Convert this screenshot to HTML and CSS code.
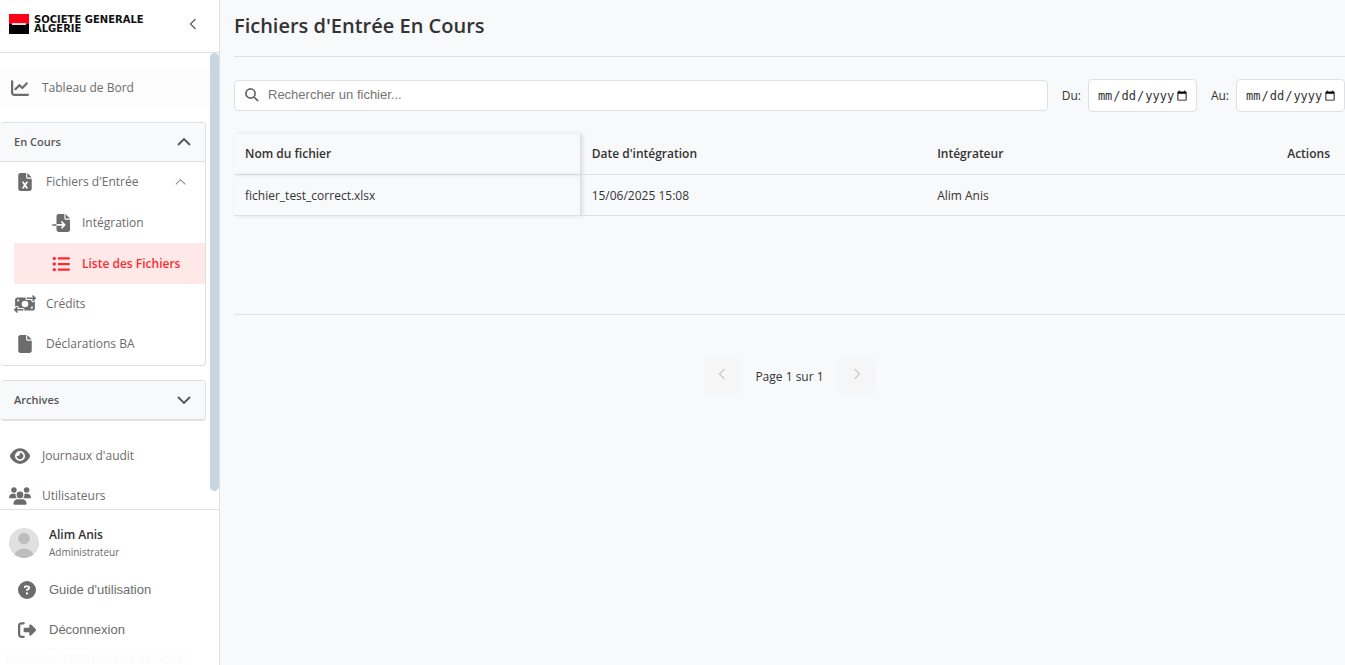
FILE: index.html
```html
<!DOCTYPE html>
<html lang="fr">
<head>
<meta charset="utf-8">
<title>Fichiers d'Entrée En Cours</title>
<link rel="stylesheet" href="styles.css">
</head>
<body>
<div class="app">
  <aside class="sidebar">
    <header class="brand">
      <svg class="brand-mark" viewBox="0 0 20 20" aria-hidden="true"><path fill="#ff0019" d="M0 0h20v10H0z"/><path d="M0 10h20v10H0z"/><path fill="#f3d9dc" d="M3 9h14v2H3z"/></svg>
      <div class="brand-name">SOCIETE GENERALE<br>ALGERIE</div>
      <button class="collapse" type="button" aria-label="Réduire le menu"><svg viewBox="0 0 8 12" aria-hidden="true"><path d="M6.500 1 1.500 6l5 5"/></svg></button>
    </header>
    <div class="nav-area">
      <nav class="nav">
        <a class="item top-item hovered" href="#"><svg class="icon" viewBox="0 0 512 512" aria-hidden="true"><path d="M64 64c0-17.700-14.300-32-32-32S0 46.300 0 64V400c0 44.200 35.800 80 80 80H480c17.700 0 32-14.300 32-32s-14.300-32-32-32H80c-8.800 0-16-7.200-16-16V64zm406.600 86.600c12.500-12.500 12.500-32.800 0-45.300s-32.800-12.500-45.300 0L320 210.700l-57.400-57.400c-12.500-12.500-32.800-12.500-45.300 0l-112 112c-12.500 12.500-12.500 32.800 0 45.300s32.800 12.500 45.300 0L240 221.300l57.400 57.400c12.500 12.500 32.800 12.500 45.300 0l128-128z"/></svg><span>Tableau de Bord</span></a>

        <section class="group">
          <button class="group-head" type="button" aria-expanded="true"><span>En Cours</span><svg class="chevron" viewBox="0 0 14 8" aria-hidden="true"><path d="M1 7l6-6 6 6"/></svg></button>
          <div class="group-body">
            <a class="item" href="#"><svg class="icon" viewBox="0 0 384 512" aria-hidden="true"><path d="M64 0C28.700 0 0 28.700 0 64V448c0 35.300 28.700 64 64 64H320c35.300 0 64-28.700 64-64V160H256c-17.700 0-32-14.300-32-32V0H64zM256 0V128H384L256 0zM155.700 250.200L192 302.100l36.300-51.900c7.600-10.900 22.600-13.500 33.400-5.900s13.500 22.600 5.900 33.400L221.300 344l46.400 66.200c7.600 10.900 5 25.800-5.900 33.400s-25.800 5-33.400-5.900L192 385.800l-36.300 51.900c-7.600 10.900-22.600 13.500-33.400 5.900s-13.500-22.600-5.900-33.400L162.700 344l-46.400-66.200c-7.600-10.900-5-25.800 5.900-33.400s25.800-5 33.400 5.900z"/></svg><span>Fichiers d'Entrée</span><svg class="chevron thin" viewBox="0 0 14 8" aria-hidden="true"><path d="M1 7l6-6 6 6"/></svg></a>
            <a class="item sub" href="#"><svg class="icon" viewBox="0 0 512 512" aria-hidden="true"><path d="M128 64c0-35.300 28.700-64 64-64H352V128c0 17.700 14.300 32 32 32H512V448c0 35.300-28.700 64-64 64H192c-35.300 0-64-28.700-64-64V336H302.100l-39 39c-9.400 9.400-9.400 24.600 0 33.900s24.600 9.400 33.900 0l80-80c9.400-9.400 9.400-24.600 0-33.900l-80-80c-9.400-9.400-24.600-9.400-33.900 0s-9.400 24.600 0 33.900l39 39H128V64zm0 224v48H24c-13.300 0-24-10.700-24-24s10.700-24 24-24H128zM512 128H384V0L512 128z"/></svg><span>Intégration</span></a>
            <a class="item sub active" href="#"><svg class="icon" viewBox="0 0 512 512" aria-hidden="true"><path d="M64 144a48 48 0 1 0 0-96 48 48 0 1 0 0 96zM192 64c-17.700 0-32 14.300-32 32s14.300 32 32 32H480c17.700 0 32-14.300 32-32s-14.300-32-32-32H192zm0 160c-17.700 0-32 14.300-32 32s14.300 32 32 32H480c17.700 0 32-14.300 32-32s-14.300-32-32-32H192zm0 160c-17.700 0-32 14.300-32 32s14.300 32 32 32H480c17.700 0 32-14.300 32-32s-14.300-32-32-32H192zM64 464a48 48 0 1 0 0-96 48 48 0 1 0 0 96zm48-208a48 48 0 1 0 -96 0 48 48 0 1 0 96 0z"/></svg><span>Liste des Fichiers</span></a>
            <a class="item" href="#"><svg class="icon" viewBox="0 0 640 512" aria-hidden="true"><path d="M535 41c-9.400-9.400-9.400-24.600 0-33.900s24.600-9.400 33.900 0l64 64c4.500 4.500 7 10.600 7 17s-2.500 12.500-7 17l-64 64c-9.400 9.400-24.600 9.400-33.900 0s-9.400-24.600 0-33.900l23-23L384 112c-13.300 0-24-10.700-24-24s10.700-24 24-24l174.100 0L535 41zM105 377l-23 23L256 400c13.300 0 24 10.700 24 24s-10.700 24-24 24L81.900 448l23 23c9.400 9.400 9.400 24.600 0 33.900s-24.600 9.400-33.900 0L7 441c-4.500-4.500-7-10.600-7-17s2.500-12.500 7-17l64-64c9.400-9.400 24.600-9.400 33.900 0s9.400 24.600 0 33.900zM96 64H337.900c-3.700 7.200-5.900 15.300-5.900 24c0 28.700 23.300 52 52 52l117.400 0c-4 17 .6 35.500 13.800 48.800c20.300 20.300 53.200 20.300 73.500 0L608 169.500V384c0 35.300-28.700 64-64 64H302.100c3.700-7.200 5.900-15.300 5.900-24c0-28.700-23.300-52-52-52l-117.400 0c4-17-.6-35.500-13.800-48.800c-20.300-20.300-53.200-20.300-73.500 0L32 342.500V128c0-35.300 28.700-64 64-64zm64 64H96v64c35.300 0 64-28.700 64-64zM544 320c-35.300 0-64 28.700-64 64h64V320zM320 352a96 96 0 1 0 0-192 96 96 0 1 0 0 192z"/></svg><span>Crédits</span></a>
            <a class="item" href="#"><svg class="icon" viewBox="0 0 384 512" aria-hidden="true"><path d="M0 64C0 28.700 28.700 0 64 0H224V128c0 17.700 14.300 32 32 32H384V448c0 35.300-28.700 64-64 64H64c-35.300 0-64-28.700-64-64V64zm384 64H256V0L384 128z"/></svg><span>Déclarations BA</span></a>
          </div>
        </section>

        <section class="group closed">
          <button class="group-head" type="button" aria-expanded="false"><span>Archives</span><svg class="chevron" viewBox="0 0 14 8" aria-hidden="true"><path d="M1 1l6 6 6-6"/></svg></button>
        </section>

        <a class="item top-item" href="#"><svg class="icon" viewBox="0 0 576 512" aria-hidden="true"><path d="M288 32c-80.800 0-145.500 36.800-192.600 80.600C48.600 156 17.300 208 2.500 243.700c-3.300 7.900-3.300 16.700 0 24.600C17.300 304 48.600 356 95.400 399.400C142.500 443.200 207.200 480 288 480s145.500-36.800 192.600-80.600c46.800-43.500 78.100-95.400 93-131.100c3.300-7.900 3.300-16.700 0-24.600c-14.900-35.700-46.200-87.700-93-131.100C433.500 68.800 368.800 32 288 32zM144 256a144 144 0 1 1 288 0 144 144 0 1 1 -288 0zm144-64c0 35.300-28.700 64-64 64c-7.100 0-13.900-1.200-20.300-3.300c-5.500-1.800-11.900 1.600-11.700 7.400c.3 6.900 1.300 13.800 3.200 20.700c13.700 51.200 66.400 81.600 117.600 67.900s81.600-66.400 67.900-117.600c-11.100-41.500-47.800-69.400-88.600-71.100c-5.800-.2-9.200 6.100-7.400 11.700c2.100 6.400 3.300 13.200 3.300 20.300z"/></svg><span>Journaux d'audit</span></a>
        <a class="item top-item" href="#"><svg class="icon" viewBox="0 0 640 512" aria-hidden="true"><circle cx="144" cy="80" r="80"/><circle cx="512" cy="80" r="80"/><circle cx="320" cy="224" r="96"/><path d="M107 192h42c16 0 31 4 45 10-8 42 5 86 41 118H21c-12 0-21-10-21-21 0-59 48-107 107-107zM405 320c36-32 49-76 41-118 14-6 29-10 45-10h42c59 0 107 48 107 107 0 11-9 21-21 21H405zM261 352h118c74 0 133 60 133 133 0 15-12 27-27 27H155c-15 0-27-12-27-27 0-73 59-133 133-133z"/></svg><span>Utilisateurs</span></a>
      </nav>
      <div class="scroll-track"><div class="scroll-thumb"></div></div>
    </div>
    <footer class="account">
      <div class="profile">
        <svg class="avatar" viewBox="0 0 30 30" aria-hidden="true"><defs><clipPath id="disc"><circle cx="15" cy="15" r="15"/></clipPath></defs><g clip-path="url(#disc)"><path fill="#e0e0e0" d="M0 0h30v30H0z"/><circle cx="15" cy="10.500" r="5.800" fill="#bdbdbd"/><ellipse cx="15" cy="28" rx="9.500" ry="7.500" fill="#bdbdbd"/></g></svg>
        <div><div class="user-name">Alim Anis</div><div class="user-role">Administrateur</div></div>
      </div>
      <button class="action" type="button"><svg class="icon" viewBox="0 0 512 512" aria-hidden="true"><path d="M256 512A256 256 0 1 0 256 0a256 256 0 1 0 0 512zM169.800 165.300c7.900-22.300 29.100-37.300 52.800-37.300h58.300c34.900 0 63.100 28.300 63.100 63.100c0 22.600-12.100 43.500-31.700 54.800L280 264.400c-.2 13-10.900 23.600-24 23.600c-13.300 0-24-10.700-24-24V250.500c0-8.600 4.600-16.500 12.100-20.800l44.300-25.400c4.700-2.700 7.600-7.700 7.600-13.100c0-8.400-6.800-15.100-15.100-15.100H222.600c-3.400 0-6.400 2.100-7.500 5.300l-.4 1.200c-4.400 12.500-18.200 19-30.600 14.600s-19-18.200-14.600-30.600l.4-1.200zM224 352a32 32 0 1 1 64 0 32 32 0 1 1 -64 0z"/></svg><span>Guide d'utilisation</span></button>
      <button class="action" type="button"><svg class="icon" viewBox="0 0 512 512" aria-hidden="true"><path d="M377.900 105.900L500.700 228.700c7.200 7.200 11.300 17.100 11.300 27.300s-4.100 20.100-11.300 27.300L377.900 406.100c-6.400 6.400-15 9.900-24 9.900c-18.700 0-33.900-15.200-33.900-33.900l0-62.100-128 0c-17.700 0-32-14.300-32-32l0-64c0-17.700 14.300-32 32-32l128 0 0-62.100c0-18.700 15.200-33.900 33.900-33.900c9 0 17.600 3.600 24 9.900zM160 96L96 96c-17.700 0-32 14.300-32 32l0 256c0 17.700 14.300 32 32 32l64 0c17.700 0 32 14.300 32 32s-14.300 32-32 32l-64 0c-53 0-96-43-96-96L0 128C0 75 43 32 96 32l64 0c17.700 0 32 14.300 32 32s-14.300 32-32 32z"/></svg><span>Déconnexion</span></button>
    </footer>
  </aside>

  <main class="main">
    <h1 class="title">Fichiers d'Entrée En Cours</h1>
    <div class="filters">
      <div class="search">
        <svg viewBox="0 0 14 14" aria-hidden="true"><circle cx="5.500" cy="5.500" r="4.600"/><path d="M9 9l4.200 4.200"/></svg>
        <input type="text" aria-label="Rechercher un fichier" placeholder="Rechercher un fichier...">
      </div>
      <div class="date-field"><label for="from">Du:</label><input id="from" type="date"></div>
      <div class="date-field"><label for="to">Au:</label><input id="to" type="date"></div>
    </div>
    <div class="table-wrap">
      <table class="files">
        <thead><tr><th class="col-name">Nom du fichier</th><th class="col-date">Date d'intégration</th><th>Intégrateur</th><th class="col-actions">Actions</th></tr></thead>
        <tbody><tr><td class="col-name">fichier_test_correct.xlsx</td><td>15/06/2025 15:08</td><td>Alim Anis</td><td></td></tr></tbody>
      </table>
    </div>
    <div class="pager">
      <button type="button" disabled aria-label="Page précédente"><svg viewBox="0 0 8 12" aria-hidden="true"><path d="M6.500 1 1.500 6l5 5"/></svg></button>
      <span>Page 1 sur 1</span>
      <button type="button" disabled aria-label="Page suivante"><svg viewBox="0 0 8 12" aria-hidden="true"><path d="M1.500 1l5 5-5 5"/></svg></button>
    </div>
  </main>
  <div class="link-status">localhost:4200/tableau-de-bord</div>
</div>
</body>
</html>
```

FILE: styles.css
```css
* { box-sizing: border-box; }

body {
  margin: 0;
  background: #f8f9fb;
  color: #333;
  font-family: "Open Sans", "Noto Sans", sans-serif;
  font-size: 12px;
  line-height: 16px;
}

button { border: 0; background: none; padding: 0; font: inherit; color: inherit; }
a { color: inherit; text-decoration: none; }

.app { display: flex; height: 100vh; overflow: hidden; }

/* Sidebar */
.sidebar {
  display: flex;
  flex-direction: column;
  flex: none;
  width: 220px;
  background: #fff;
  border-right: 1px solid #dee0e3;
  color: #6c6c6c;
}

.brand {
  display: flex;
  align-items: flex-start;
  height: 53px;
  padding: 14px 22px 0 9px;
  border-bottom: 1px solid #e0e0e0;
}
.brand-mark { width: 20px; height: 20px; }
.brand-name {
  margin: 1px 0 0 5px;
  color: #111;
  font-family: "DejaVu Sans", sans-serif;
  font-size: 10px;
  font-weight: 700;
  line-height: 9px;
  white-space: nowrap;
}
.collapse { margin-left: auto; padding-top: 4px; line-height: 0; }
.collapse svg { width: 8px; height: 12px; fill: none; stroke: #666; stroke-width: 1.4; }

.nav-area { display: flex; flex: 1; min-height: 0; }
.nav { flex: 1; min-width: 0; padding-top: 15px; overflow: hidden; }
.scroll-track { width: 9px; }
.scroll-thumb { height: 96%; border-radius: 5px; background: #c9d6df; }

.item { display: flex; align-items: center; height: 40px; padding-left: 14px; }
.item .icon { margin-right: 10px; }
.icon { width: 22px; height: 18px; fill: currentColor; }
.top-item { padding-left: 9px; }
.top-item .icon { margin-right: 11px; }
.hovered { background: #fcfcfc; }
.sub { height: 41px; margin-left: 14px; padding-left: 36px; }
.active { background: #ffe9e8; color: #ff2a30; font-weight: 600; }

.group {
  margin: 14px 4px 14px 0;
  border: 1px solid #dedfe1;
  border-left: 0;
  border-radius: 4px;
  overflow: hidden;
}
.closed { margin-bottom: 16px; box-shadow: 0 1px 0 #e4e5e7; }
.group-head {
  display: flex;
  align-items: center;
  justify-content: space-between;
  width: 100%;
  height: 38px;
  padding: 0 14px;
  background: #f8f9fb;
  color: #555;
  font-size: 11px;
  font-weight: 600;
}
.group-body { border-top: 1px solid #dedfe1; padding-bottom: 1px; }
.chevron { width: 14px; height: 8px; fill: none; stroke: #555; stroke-width: 1.8; }
.thin { width: 11px; margin: 0 19px 0 auto; stroke: #888; stroke-width: 1.3; }

.account { padding: 17px 9px 15px; border-top: 1px solid #e0e0e0; }
.profile { display: flex; align-items: center; gap: 10px; height: 32px; margin-bottom: 11px; }
.avatar { width: 30px; height: 30px; }
.user-name { color: #333; font-weight: 600; line-height: 18px; }
.user-role { font-size: 10px; }
.action {
  display: flex;
  align-items: center;
  gap: 11px;
  width: 100%;
  height: 40px;
  padding-left: 7px;
  font-family: "Liberation Sans", Arial, sans-serif;
  font-size: 13px;
}

/* Content */
.main { flex: 1; min-width: 0; padding-left: 14px; }
.title {
  margin: 0;
  padding: 12px 0 16px;
  border-bottom: 1px solid #dee0e3;
  font-size: 20px;
  font-weight: 600;
  line-height: 28px;
}

.filters { display: flex; align-items: center; gap: 14px; padding: 22px 0; }
.search {
  display: flex;
  align-items: center;
  flex: 1;
  gap: 9px;
  height: 31px;
  padding: 0 10px 2px;
  border: 1px solid #dee0e3;
  border-radius: 4px;
  background: #fff;
}
.search svg { width: 14px; height: 14px; fill: none; stroke: #666; stroke-width: 1.7; }
.search input {
  flex: 1;
  border: 0;
  padding: 0;
  outline: 0;
  background: none;
  font: 13px "Liberation Sans", Arial, sans-serif;
}
.search input::placeholder { color: #757575; }
.date-field { display: flex; align-items: center; gap: 7px; }
.date-field input {
  width: 109px;
  height: 33px;
  padding: 0 8px;
  border: 1px solid #dee0e3;
  border-radius: 4px;
  background: #fff;
  color: #333;
  font: 12px "DejaVu Sans Mono", monospace;
}
.date-field input::-webkit-calendar-picker-indicator { margin-left: 2px; padding: 0; }

.table-wrap { min-height: 181px; border-bottom: 1px solid #dee0e3; }
.files { width: 100%; border-collapse: separate; border-spacing: 0; table-layout: fixed; }
.files th, .files td {
  height: 41px;
  padding: 0 11px;
  border-bottom: 1px solid #dee0e3;
  text-align: left;
  font-weight: 400;
}
.files th { font-weight: 600; }
.files td { padding-top: 1px; }
.files .col-name {
  width: 31.2%;
  border-right: 1px solid #dcdddf;
  box-shadow: 2px 0 4px rgba(0, 0, 0, 0.1);
}
.files .col-date { width: 31.1%; }
.files .col-actions { padding-right: 15px; text-align: right; }

.pager { display: flex; justify-content: center; align-items: center; gap: 15px; padding-top: 43px; }
.pager span { padding-top: 2px; }
.pager button { width: 36px; height: 36px; border-radius: 4px; background: #f6f6f7; }
.pager svg { width: 8px; height: 12px; fill: none; stroke: #ccc; stroke-width: 1.4; }

/* Link address, almost faded out */
.link-status {
  position: absolute;
  left: 0;
  bottom: 0;
  height: 17px;
  overflow: hidden;
  padding: 2px 6px 0;
  border: 1px solid #fcfcfc;
  border-width: 1px 1px 0 0;
  color: #fafafa;
}
```
